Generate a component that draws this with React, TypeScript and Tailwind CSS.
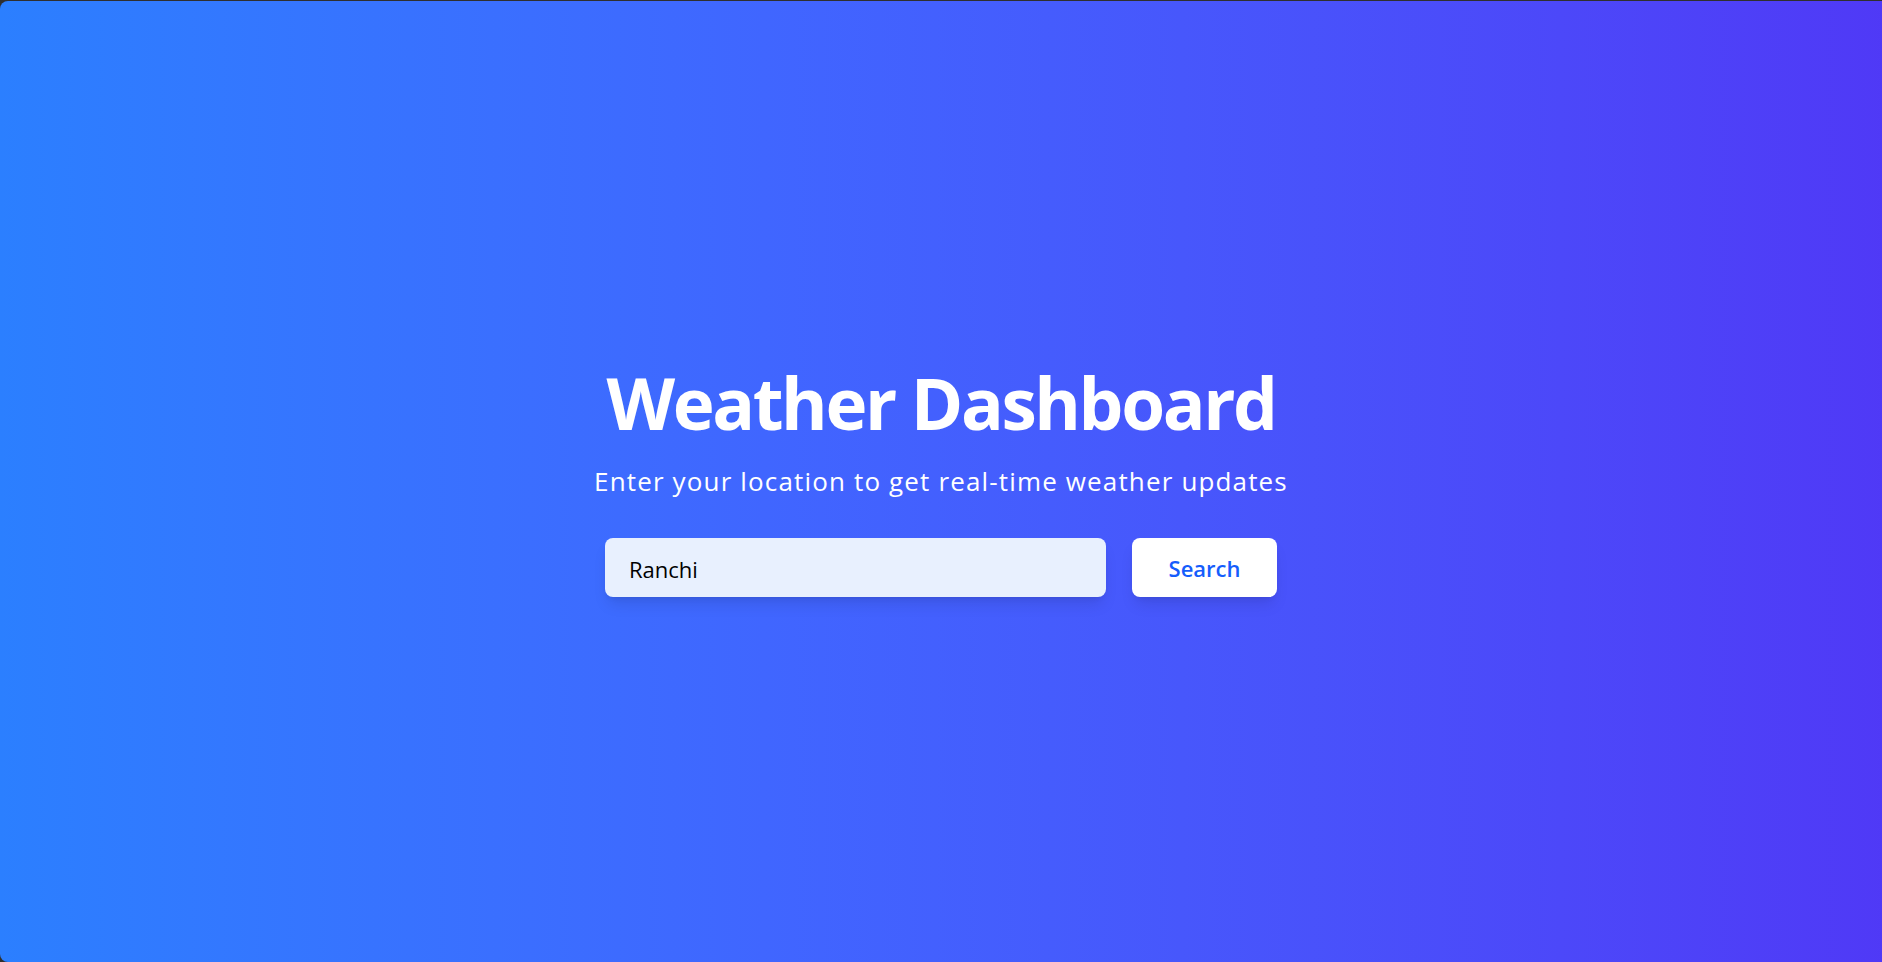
import React from "react";

export default function App() {
  return (
    <div className="h-screen w-full bg-[#2f2f2f] pt-px" style={{ fontFamily: '"Open Sans", "Noto Sans", sans-serif' }}>
      <div className="flex h-full w-full flex-col items-center justify-center rounded-l-[8px] bg-gradient-to-r from-blue-500 to-indigo-600">
        <h1 className="text-[71px] font-bold leading-none tracking-[-2.4px] text-white">Weather Dashboard</h1>
        <p className="mt-[27px] text-[26px] leading-8 tracking-[1.15px] text-white">Enter your location to get real-time weather updates</p>
        <div className="mt-[41px] flex items-center gap-[26px]">
          <input
            defaultValue="Ranchi"
            className="h-[59px] w-[501px] rounded-lg bg-[#e8f0fe] px-6 pt-[3px] text-[22px] text-black shadow-lg outline-none"
          />
          <button className="h-[59px] w-[145px] rounded-lg bg-white pt-[3px] text-[22px] font-semibold text-blue-600 shadow-lg">
            Search
          </button>
        </div>
      </div>
    </div>
  );
}
